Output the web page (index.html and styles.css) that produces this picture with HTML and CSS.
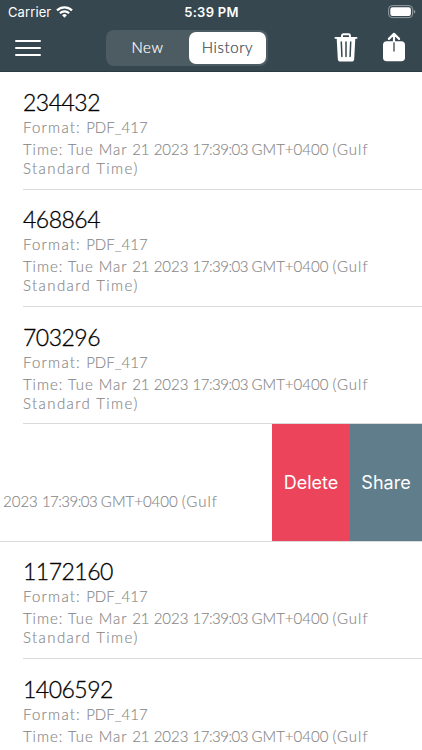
FILE: index.html
```
<!DOCTYPE html>
<html lang="en">
<head>
<meta charset="utf-8">
<title>History</title>
<link rel="stylesheet" href="styles.css">
</head>
<body>
<div class="app">
  <header class="header">
    <div class="status">
      <div class="carrier"><span class="carrier-name">Carrier</span>
        <svg class="wifi" width="17" height="12" viewBox="0 0 17 12" fill="none" stroke="#fff" stroke-width="2.2"><path d="M1 4.4a10.6 10.6 0 0 1 15 0M3.9 7.2a6.5 6.5 0 0 1 9.2 0"/><path d="M8.5 11.7 6.1 9.3a3.4 3.4 0 0 1 4.8 0z" fill="#fff" stroke="none"/></svg>
      </div>
      <div class="clock">5:39 PM</div>
      <svg class="battery" width="28" height="14" viewBox="0 0 28 14"><rect x=".6" y=".6" width="24" height="12" rx="3.6" fill="none" stroke="#929da1"/><rect x="2.3" y="2.3" width="20.6" height="8.6" rx="2.2" fill="#fff"/><path d="M25.8 4.8q1.5.6 1.5 1.9t-1.5 1.9z" fill="#929da1"/></svg>
    </div>
    <nav class="toolbar">
      <div class="menu"><i></i><i></i><i></i></div>
      <div class="segments"><span class="segment segment-new">New</span><span class="segment active">History</span></div>
      <svg class="trash" width="24" height="29" viewBox="0 0 24 29"><path d="M8 4V2.6Q8 1.2 9.4 1.2h5.2Q16 1.2 16 2.6V4" fill="none" stroke="#fff" stroke-width="1.9"/><path d="M1.5 4h21q1 0 1 .9t-1 .9h-1.2L20.2 26q-.2 2.6-2.8 2.6H6.6Q4 28.6 3.8 26L2.7 5.8H1.5q-1 0-1-.9t1-.9z" fill="#fff"/><path d="m7.3 9 .6 14.500M12 9v14.500M16.700 9l-.6 14.500" stroke="#37474f" stroke-width="1.500" stroke-linecap="round"/></svg>
      <svg class="export" width="24" height="30" viewBox="0 0 24 30" fill="none"><rect x="1" y="9.300" width="22" height="20" rx="3.800" fill="#fff"/><path d="M12 9.300V19" stroke="#37474f" stroke-width="1.300" stroke-linecap="round"/><path d="M12 9.500V2M6.900 6.900 12 1.800l5.100 5.100" stroke="#fff" stroke-width="2.200" stroke-linecap="round" stroke-linejoin="round"/></svg>
    </nav>
  </header>
  <main class="list">
    <article class="row"><h2>234432</h2><p class="format"><span class="label">Format: </span>PDF_417</p><p class="time"><span class="day">Time: Tue Mar </span>21 2023 <span class="hour">17:39:03 </span>GMT+0400 <span class="place">(Gulf</span></p><p class="zone">Standard Time)</p></article>
    <article class="row"><h2>468864</h2><p class="format"><span class="label">Format: </span>PDF_417</p><p class="time"><span class="day">Time: Tue Mar </span>21 2023 <span class="hour">17:39:03 </span>GMT+0400 <span class="place">(Gulf</span></p><p class="zone">Standard Time)</p></article>
    <article class="row"><h2>703296</h2><p class="format"><span class="label">Format: </span>PDF_417</p><p class="time"><span class="day">Time: Tue Mar </span>21 2023 <span class="hour">17:39:03 </span>GMT+0400 <span class="place">(Gulf</span></p><p class="zone">Standard Time)</p></article>
    <article class="swiped">
      <p class="time">2023 <span class="hour">17:39:03 </span>GMT+0400 <span class="place">(Gulf</span></p>
      <div class="actions"><span class="delete">Delete</span><span class="share">Share</span></div>
    </article>
    <article class="row"><h2>1172160</h2><p class="format"><span class="label">Format: </span>PDF_417</p><p class="time"><span class="day">Time: Tue Mar </span>21 2023 <span class="hour">17:39:03 </span>GMT+0400 <span class="place">(Gulf</span></p><p class="zone">Standard Time)</p></article>
    <article class="row last"><h2>1406592</h2><p class="format"><span class="label">Format: </span>PDF_417</p><p class="time"><span class="day">Time: Tue Mar </span>21 2023 <span class="hour">17:39:03 </span>GMT+0400 <span class="place">(Gulf</span></p></article>
  </main>
</div>
</body>
</html>
```
FILE: styles.css
```
* { box-sizing: border-box; margin: 0; }
body { background: #fff; overflow: hidden; }
.app { width: 422px; height: 750px; overflow: hidden; font-family: Lato, sans-serif; }
.header { height: 72px; background: #37474f; border-bottom: 1px solid #2c3b42; color: #fff; }
.status { height: 24px; display: grid; grid-template-columns: 1fr auto 1fr; align-items: center; padding: 0 7px 0 8px; font-family: Inter, sans-serif; }
.carrier { display: flex; align-items: center; gap: 5px; font-size: 13px; letter-spacing: .1px; }
.clock { font-size: 13px; font-weight: 600; letter-spacing: .3px; }
.battery { justify-self: end; margin-top: -1px; margin-right: -1px; }
.toolbar { display: flex; align-items: center; height: 47px; padding-left: 15px; }
.menu { width: 26px; display: grid; gap: 5px; }
.menu i { height: 2px; border-radius: 1px; background: #fff; }
.segments { width: 162px; height: 36px; margin-left: 65px; padding: 2px; border-radius: 8px; background: #4d5b62; display: flex; font-size: 15px; font-weight: 300; -webkit-text-stroke: .2px currentColor; }
.segment { width: 77px; padding-bottom: 1px; display: flex; align-items: center; justify-content: center; border-radius: 7px; letter-spacing: .6px; }
.segment-new { width: 81px; padding-right: 2px; }
.active { background: #fff; color: #37474f; }
.trash { margin-left: 66px; margin-top: -1px; }
.export { margin-left: 24px; margin-top: -1px; }
.list { padding-top: .2px; }
.row { height: 117.400px; margin-left: 23px; padding-top: 15.600px; border-bottom: 1px solid #dadada; }
.last { border: 0; }
h2 { font-size: 23px; font-weight: 300; line-height: 28px; letter-spacing: -.5px; color: #000; -webkit-text-stroke: .3px #000; }
p { font-size: 15px; font-weight: 300; line-height: 20px; color: #888; white-space: nowrap; -webkit-text-stroke: .15px #888; }
.format { line-height: 22px; margin-bottom: 1px; }
.label { letter-spacing: 1.200px; }
.time { letter-spacing: 0; }
.day { letter-spacing: .95px; }
.hour { letter-spacing: -.5px; }
.place { letter-spacing: 1px; }
.zone { line-height: 19px; letter-spacing: 1.400px; }
.swiped { height: 117.400px; display: flex; justify-content: space-between; border-bottom: 1px solid #dadada; }
.swiped .time { padding: 66.500px 0 0 3px; }
.actions { display: flex; color: #fff; font: 18px/118px Inter, sans-serif; text-align: center; }
.delete { width: 78px; background: #ec445a; }
.share { width: 72px; background: #607d8b; }
```
